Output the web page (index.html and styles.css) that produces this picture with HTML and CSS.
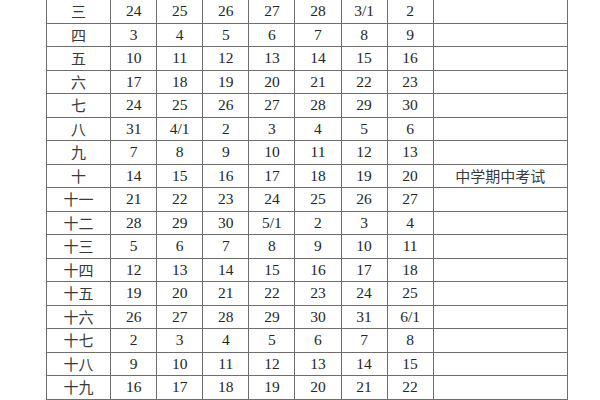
FILE: index.html
```html
<!DOCTYPE html>
<html lang="zh">
<head>
<meta charset="utf-8">
<link rel="stylesheet" href="styles.css">
</head>
<body>
<div class="page">
<table class="cal">
<colgroup>
<col class="c-week"><col class="c-d"><col class="c-d"><col class="c-d"><col class="c-d"><col class="c-d"><col class="c-d"><col class="c-d"><col class="c-note">
</colgroup>
<tbody>
<tr><td class="wk">三</td><td>24</td><td>25</td><td>26</td><td>27</td><td>28</td><td>3/1</td><td>2</td><td></td></tr>
<tr><td class="wk">四</td><td>3</td><td>4</td><td>5</td><td>6</td><td>7</td><td>8</td><td>9</td><td></td></tr>
<tr><td class="wk">五</td><td>10</td><td>11</td><td>12</td><td>13</td><td>14</td><td>15</td><td>16</td><td></td></tr>
<tr><td class="wk">六</td><td>17</td><td>18</td><td>19</td><td>20</td><td>21</td><td>22</td><td>23</td><td></td></tr>
<tr><td class="wk">七</td><td>24</td><td>25</td><td>26</td><td>27</td><td>28</td><td>29</td><td>30</td><td></td></tr>
<tr><td class="wk">八</td><td>31</td><td>4/1</td><td>2</td><td>3</td><td>4</td><td>5</td><td>6</td><td></td></tr>
<tr><td class="wk">九</td><td>7</td><td>8</td><td>9</td><td>10</td><td>11</td><td>12</td><td>13</td><td></td></tr>
<tr><td class="wk">十</td><td>14</td><td>15</td><td>16</td><td>17</td><td>18</td><td>19</td><td>20</td><td class="note">中学期中考试</td></tr>
<tr><td class="wk">十一</td><td>21</td><td>22</td><td>23</td><td>24</td><td>25</td><td>26</td><td>27</td><td></td></tr>
<tr><td class="wk">十二</td><td>28</td><td>29</td><td>30</td><td>5/1</td><td>2</td><td>3</td><td>4</td><td></td></tr>
<tr><td class="wk">十三</td><td>5</td><td>6</td><td>7</td><td>8</td><td>9</td><td>10</td><td>11</td><td></td></tr>
<tr><td class="wk">十四</td><td>12</td><td>13</td><td>14</td><td>15</td><td>16</td><td>17</td><td>18</td><td></td></tr>
<tr><td class="wk">十五</td><td>19</td><td>20</td><td>21</td><td>22</td><td>23</td><td>24</td><td>25</td><td></td></tr>
<tr><td class="wk">十六</td><td>26</td><td>27</td><td>28</td><td>29</td><td>30</td><td>31</td><td>6/1</td><td></td></tr>
<tr><td class="wk">十七</td><td>2</td><td>3</td><td>4</td><td>5</td><td>6</td><td>7</td><td>8</td><td></td></tr>
<tr><td class="wk">十八</td><td>9</td><td>10</td><td>11</td><td>12</td><td>13</td><td>14</td><td>15</td><td></td></tr>
<tr><td class="wk">十九</td><td>16</td><td>17</td><td>18</td><td>19</td><td>20</td><td>21</td><td>22</td><td></td></tr>
</tbody>
</table>
</div>
</body>
</html>
```

FILE: styles.css
```css
html, body {
  margin: 0;
  padding: 0;
  background: #ffffff;
}

.page {
  width: 600px;
  height: 400px;
  overflow: hidden;
  padding-left: 46px;
  box-sizing: border-box;
}

.cal {
  margin-top: -1px;
  border-collapse: collapse;
  table-layout: fixed;
  width: 522px;
  font-family: "Liberation Serif", "Noto Sans CJK SC", serif;
  font-size: 15.5px;
  color: #262626;
}

.c-week { width: 64px; }
.c-d { width: 46px; }
.c-note { width: 134px; }

.cal td {
  border: 1px solid #6e6e6e;
  height: 22.5px;
  padding: 0;
  text-align: center;
  vertical-align: middle;
  line-height: 16px;
}

.cal td.wk,
.cal td.note {
  font-family: "Noto Sans CJK SC", sans-serif;
  font-weight: 400;
  font-size: 15px;
  color: #3a3a3a;
}
```
